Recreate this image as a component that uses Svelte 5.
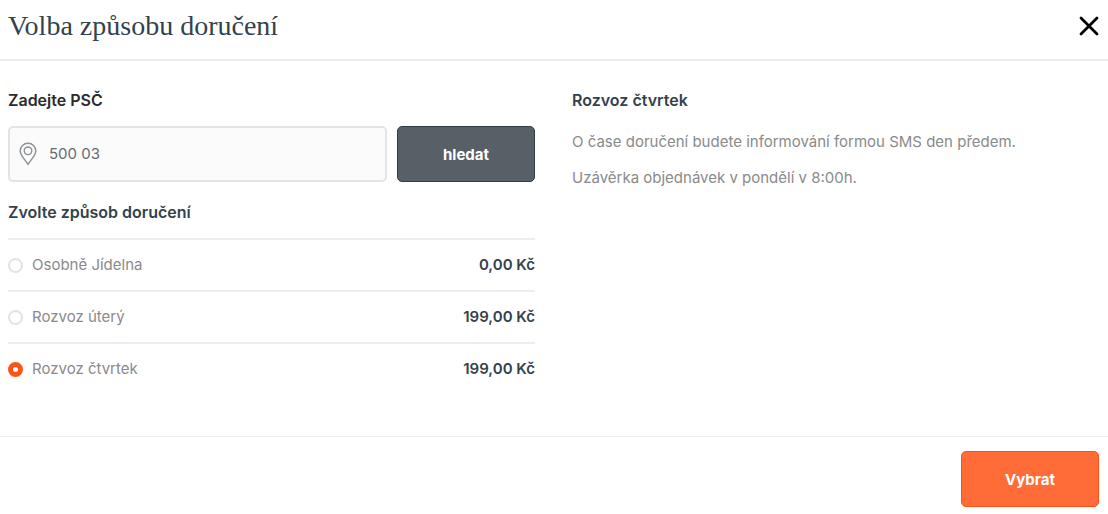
<script>
	let zip = $state('500 03');
	let selected = $state('thursday');

	const options = [
		{ id: 'pickup', name: 'Osobně Jídelna', price: '0,00 Kč' },
		{ id: 'tuesday', name: 'Rozvoz úterý', price: '199,00 Kč' },
		{ id: 'thursday', name: 'Rozvoz čtvrtek', price: '199,00 Kč' }
	];

	let current = $derived(options.find((option) => option.id === selected));
</script>

<div class="modal">
	<header class="modal-header">
		<h1>Volba způsobu doručení</h1>
		<button class="close" type="button" aria-label="Zavřít">
			<svg width="20" height="20" viewBox="0 0 20 20">
				<path d="M2 2 18 18M18 2 2 18" fill="none" stroke="#000" stroke-width="2.8" stroke-linecap="round" />
			</svg>
		</button>
	</header>

	<main class="modal-body">
		<section>
			<form onsubmit={(e) => e.preventDefault()}>
				<label class="heading dark" for="zip">Zadejte PSČ</label>
				<div class="search">
					<div class="field">
						<svg width="18" height="24" viewBox="0 0 18 24" fill="none" stroke="#8b9094" stroke-width="1.4">
							<path
								d="M9 22.4C7.2 18.8 1.2 14 1.2 8.8A7.8 7.6 0 0 1 16.8 8.8C16.8 14 10.8 18.8 9 22.4Z"
								stroke-linejoin="round"
							/>
							<circle cx="9" cy="8.8" r="3.8" />
						</svg>
						<input id="zip" type="text" bind:value={zip} />
					</div>
					<button class="btn grey" type="submit">hledat</button>
				</div>
			</form>

			<h2 class="heading">Zvolte způsob doručení</h2>
			<ul class="options">
				{#each options as option (option.id)}
					<li>
						<label>
							<input type="radio" name="delivery" value={option.id} bind:group={selected} />
							<span>{option.name}</span>
							<span class="price">{option.price}</span>
						</label>
					</li>
				{/each}
			</ul>
		</section>

		<section class="info">
			<h2 class="heading">{current.name}</h2>
			<p>O čase doručení budete informování formou SMS den předem.</p>
			<p>Uzávěrka objednávek v pondělí v 8:00h.</p>
		</section>
	</main>

	<footer class="modal-footer">
		<button class="btn orange" type="button">Vybrat</button>
	</footer>
</div>

<style>
	:global(body) {
		margin: 0;
		background: #fff;
	}

	.modal {
		font-family: Inter, 'Liberation Sans', sans-serif;
		font-size: 15px;
		line-height: 24px;
		color: #8a8a8a;
	}

	.modal-header {
		display: flex;
		justify-content: space-between;
		align-items: center;
		padding: 10px 9px 17px 8px;
		border-bottom: 2px solid #ededed;
	}

	h1 {
		margin: 0;
		font-family: 'Liberation Serif', serif;
		font-size: 28px;
		font-weight: 400;
		line-height: 32px;
		color: #33424c;
	}

	.close {
		display: flex;
		padding: 0;
		border: none;
		background: none;
		cursor: pointer;
	}

	.modal-body {
		display: grid;
		grid-template-columns: 1fr 1fr;
		gap: 37px;
		padding: 27px 9px 42px 8px;
	}

	.heading {
		display: block;
		margin: 0;
		font-size: 16px;
		font-weight: 600;
		line-height: 24px;
		color: #33424c;
	}

	.heading.dark {
		color: #2b2b2b;
	}

	.search {
		display: flex;
		gap: 10px;
		margin: 14px 0 18px;
	}

	.field {
		display: flex;
		flex: 1;
		align-items: center;
		gap: 12px;
		height: 56px;
		padding: 0 9px;
		box-sizing: border-box;
		border: 2px solid #e4e4e4;
		border-radius: 5px;
		background: #fbfbfb;
	}

	.field input {
		flex: 1;
		min-width: 0;
		padding: 0;
		border: none;
		outline: none;
		background: none;
		font: inherit;
		color: #666b6f;
	}

	.btn {
		width: 138px;
		height: 56px;
		padding: 0;
		border: 1px solid;
		border-radius: 5px;
		font-family: inherit;
		font-size: 15px;
		font-weight: 700;
		color: #fff;
		cursor: pointer;
	}

	.btn.grey {
		border-color: #2f3f49;
		background: #586067;
	}

	.btn.orange {
		border-color: #ff4f14;
		background: #ff6c37;
	}

	.options {
		margin: 14px 0 0;
		padding: 0;
		list-style: none;
	}

	.options li {
		border-top: 2px solid #ededed;
	}

	.options label {
		display: flex;
		align-items: center;
		height: 50px;
		cursor: pointer;
	}

	.options input {
		appearance: none;
		width: 15px;
		height: 15px;
		margin: 0 9px 0 0;
		border: 2px solid #e2e2e2;
		border-radius: 50%;
		background: #fff;
	}

	.options input:checked {
		border: 5px solid #ff5216;
	}

	.price {
		margin-left: auto;
		font-weight: 600;
		color: #33424c;
	}

	.info p {
		margin: 0 0 12px;
	}

	.info .heading {
		margin-bottom: 18px;
	}

	.modal-footer {
		display: flex;
		justify-content: flex-end;
		padding: 14px 9px 8px;
		border-top: 1px solid #ededed;
	}
</style>
